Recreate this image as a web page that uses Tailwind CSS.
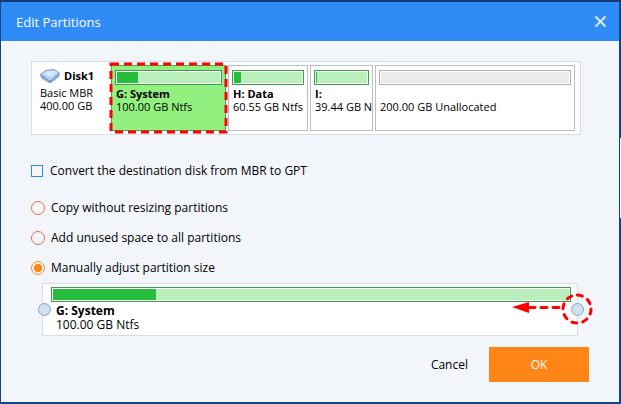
<!DOCTYPE html>
<html lang="en">
<head>
  <meta charset="UTF-8">
  <meta name="viewport" content="width=device-width, initial-scale=1.0">
  <title>Edit Partitions</title>
  <script src="https://cdn.jsdelivr.net/npm/@tailwindcss/browser@4"></script>
</head>
<body class="relative flex flex-col min-h-screen bg-[#0f4589] border-t-2 border-[#133a73] pl-px pr-[2px] pb-[2px] font-['Open_Sans','Noto_Sans',sans-serif] text-[12px] leading-4 text-black">
  <div class="flex-1 flex flex-col bg-[#f2f5fa]">

    <!-- Title bar -->
    <header class="flex items-center justify-between h-[39px] pl-[15px] pr-3 bg-[#2f8bf6] text-white">
      <h1 class="text-[13px]">Edit Partitions</h1>
      <button type="button" aria-label="Close" class="p-0">
        <svg class="block w-[13px] h-[13px]" viewBox="0 0 13 13" fill="none" stroke="#d9e8fc" stroke-width="2"><path d="M1.500 1.500l10 10M11.500 1.500l-10 10"/></svg>
      </button>
    </header>

    <main class="flex-1 flex flex-col px-[30px] pt-5">
      <!-- Disk map -->
      <section class="flex gap-[2px] mr-2 py-[3px] pr-[5px] bg-white border border-[#d5dcea] h-[74px] text-[11px] leading-[13px]">
        <div class="w-[77px] pl-2">
          <div class="flex items-center gap-1 h-[21px] font-bold">
            <svg class="w-5 h-[14px]" viewBox="0 0 20 14">
              <path d="M0 5L6 1L14 0L20 4L19 8L11 14L9 14L1 9Z" fill="#7897cf"/>
              <path d="M1 5L6 2L14 1L19 4L11 11L9 11Z" fill="#b9d3f6"/>
              <path d="M4 5L8 2L14 2L16 4L11 8Z" fill="#d9e9fd"/>
              <path d="M1 7L9 12L9 13L1 8ZM11 12L19 6L18 8L11 13Z" fill="#a5bee8"/>
            </svg>
            Disk1
          </div>
          <p>Basic MBR</p>
          <p>400.00 GB</p>
        </div>
        <div class="relative flex-[107] min-w-0 px-[3px] py-1 border border-[#559a55] bg-[#92f07e]">
          <div class="h-[15px] p-px bg-white border border-[#3a9d4b]"><div class="h-full bg-[#baeeba]"><div class="h-full bg-[#25bd3b]" style="width: 20%"></div></div></div>
          <p class="mt-[2px] pl-px font-bold">G: System</p>
          <p class="pl-px whitespace-nowrap">100.00 GB Ntfs</p>
          <svg class="absolute -top-[2px] -left-px w-[calc(100%+2px)] h-[calc(100%+4px)] overflow-visible" aria-hidden="true">
            <rect width="100%" height="100%" fill="none" stroke="#fe0000" stroke-width="3" stroke-dasharray="8 5"/>
          </svg>
        </div>
        <div class="flex-[72] min-w-0 px-[3px] py-1 border border-[#b9bccb]">
          <div class="h-[15px] p-px bg-white border border-[#3a9d4b]"><div class="h-full bg-[#baeeba]"><div class="h-full bg-[#25bd3b]" style="width: 11%"></div></div></div>
          <p class="mt-[2px] pl-px font-bold">H: Data</p>
          <p class="pl-px whitespace-nowrap">60.55 GB Ntfs</p>
        </div>
        <div class="flex-[55] min-w-0 px-[3px] py-1 border border-[#b9bccb]">
          <div class="h-[15px] p-px bg-white border border-[#3a9d4b]"><div class="h-full bg-[#baeeba]"><div class="h-full bg-[#25bd3b]" style="width: 2%"></div></div></div>
          <p class="mt-[2px] pl-px font-bold">I:</p>
          <p class="pl-px whitespace-nowrap">39.44 GB N</p>
        </div>
        <div class="flex-[192] min-w-0 px-[3px] py-1 border border-[#b9bccb]">
          <div class="h-[15px] p-px bg-white border border-[#aeb2ae]"><div class="h-full bg-[#ebebeb]"></div></div>
          <p class="mt-[15px] pl-px whitespace-nowrap">200.00 GB Unallocated</p>
        </div>
      </section>

      <!-- Options -->
      <label class="flex items-center gap-[7px] mt-7 self-start">
        <input type="checkbox" class="appearance-none w-3 h-3 border border-[#2f8bf6] checked:bg-[#2f8bf6]">
        Convert the destination disk from MBR to GPT
      </label>
      <div class="flex flex-col items-start gap-[14px] mt-[21px]">
        <label class="flex items-center gap-[6px]">
          <input type="radio" name="resize" class="appearance-none w-[14px] h-[14px] rounded-full border border-[#ec6a3c] checked:border-[#ff8a1c] checked:bg-radial checked:from-[#ff8517] checked:from-45% checked:to-transparent checked:to-52%">
          Copy without resizing partitions
        </label>
        <label class="flex items-center gap-[6px]">
          <input type="radio" name="resize" class="appearance-none w-[14px] h-[14px] rounded-full border border-[#ec6a3c] checked:border-[#ff8a1c] checked:bg-radial checked:from-[#ff8517] checked:from-45% checked:to-transparent checked:to-52%">
          Add unused space to all partitions
        </label>
        <label class="flex items-center gap-[6px]">
          <input type="radio" name="resize" checked class="appearance-none w-[14px] h-[14px] rounded-full border border-[#ec6a3c] checked:border-[#ff8a1c] checked:bg-radial checked:from-[#ff8517] checked:from-45% checked:to-transparent checked:to-52%">
          Manually adjust partition size
        </label>
      </div>

      <!-- Size slider -->
      <section class="relative mt-[7px] mx-[11px] h-[53px] pt-[3px] pl-2 pr-[6px] bg-white border border-[#d5dcea]">
        <div class="h-[15px] p-px bg-white border border-[#3a9d4b]"><div class="h-full bg-[#baeeba]"><div class="h-full bg-[#25bd3b]" style="width: 20%"></div></div></div>
        <div class="pl-[5px] pt-[2px] leading-[14px]">
          <p class="font-bold">G: System</p>
          <p>100.00 GB Ntfs</p>
        </div>
        <button type="button" aria-label="Partition start" class="absolute -left-[5px] top-[19px] w-[13px] h-[13px] rounded-full border border-[#87a2c4] bg-[#d1dfec]"></button>
        <button type="button" aria-label="Partition end" class="absolute -right-[7px] top-[19px] w-[13px] h-[13px] rounded-full border border-[#87a2c4] bg-[#d1dfec]"></button>
        <svg class="absolute -right-4 top-[9px] w-[82px] h-8 pointer-events-none" viewBox="0 0 82 32" fill="none" stroke="#fe0000" stroke-width="3" stroke-linecap="round" aria-hidden="true">
          <circle cx="66" cy="16" r="14" stroke-dasharray="5 6"/>
          <path d="M18 14.500H50" stroke-dasharray="6 6"/>
          <path d="M1 14L18 9V20Z" fill="#fe0000" stroke="none"/>
        </svg>
      </section>

      <!-- Actions -->
      <div class="flex justify-end gap-[10px] mt-[11px]">
        <button type="button" class="px-[11px]">Cancel</button>
        <button type="button" class="w-[100px] h-[35px] bg-[#ff8517] text-white">OK</button>
      </div>
    </main>
  </div>

  <!-- Window behind the dialog -->
  <div class="absolute right-0 top-[136px] w-px h-20 bg-[#f2f5fa]"></div>
</body>
</html>
